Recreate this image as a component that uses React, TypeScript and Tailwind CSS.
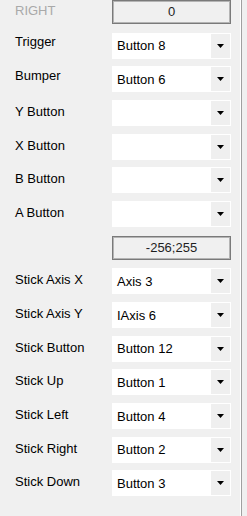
const rowsTop = [
  { label: 'Trigger', value: 'Button 8', up: true },
  { label: 'Bumper', value: 'Button 6', up: true },
  { label: 'Y Button', value: '' },
  { label: 'X Button', value: '' },
  { label: 'B Button', value: '' },
  { label: 'A Button', value: '' },
];

const rowsStick = [
  { label: 'Stick Axis X', value: 'Axis 3' },
  { label: 'Stick Axis Y', value: 'IAxis 6' },
  { label: 'Stick Button', value: 'Button 12' },
  { label: 'Stick Up', value: 'Button 1' },
  { label: 'Stick Left', value: 'Button 4' },
  { label: 'Stick Right', value: 'Button 2' },
  { label: 'Stick Down', value: 'Button 3' },
];

function Combo({ value }: { value: string }) {
  return (
    <div className="flex h-[26px] w-[119px] items-stretch bg-white p-[1px]">
      <div className="flex flex-1 items-center pl-[4px] text-black">{value}</div>
      <div className="flex w-[19px] items-center justify-center bg-[#efefef]">
        <svg width="7" height="4" viewBox="0 0 7 4">
          <path d="M0 0h7L3.5 4z" fill="#000" />
        </svg>
      </div>
    </div>
  );
}

function ReadBox({ text }: { text: string }) {
  return (
    <div className="flex h-[24px] w-[119px] items-center justify-center border border-[#7a7a7a] bg-[#f0f0f0] text-[#1e1e1e] shadow-[inset_0_0_0_1px_#b4b4b4]">
      {text}
    </div>
  );
}

function Row({ label, children, dim, up }: { label: string; children: React.ReactNode; dim?: boolean; up?: boolean }) {
  return (
    <div className="flex h-[33.7px] items-center">
      <div
        className={`w-[112px] pl-[15px] ${up ? 'pb-[8px]' : 'pb-[3px]'} ${dim ? 'text-[#a9a9a9]' : 'text-black'}`}
      >
        {label}
      </div>
      {children}
    </div>
  );
}

export default function App() {
  return (
    <div
      className="flex h-[516px] w-[247px] bg-[#f0f0f0] text-[13px] leading-none"
      style={{ fontFamily: '"Liberation Sans", Arial, sans-serif' }}
    >
      <div className="mt-[-5px] flex w-[240px] flex-col">
        <Row label="RIGHT" dim>
          <ReadBox text="0" />
        </Row>
        {rowsTop.map((r) => (
          <Row key={r.label} label={r.label} up={r.up}>
            <Combo value={r.value} />
          </Row>
        ))}
        <Row label="">
          <ReadBox text="-256;255" />
        </Row>
        {rowsStick.map((r) => (
          <Row key={r.label} label={r.label}>
            <Combo value={r.value} />
          </Row>
        ))}
      </div>
      <div className="w-[1px] bg-white" />
      <div className="w-[1px] bg-[#a0a0a0]" />
      <div className="flex-1" />
    </div>
  );
}
